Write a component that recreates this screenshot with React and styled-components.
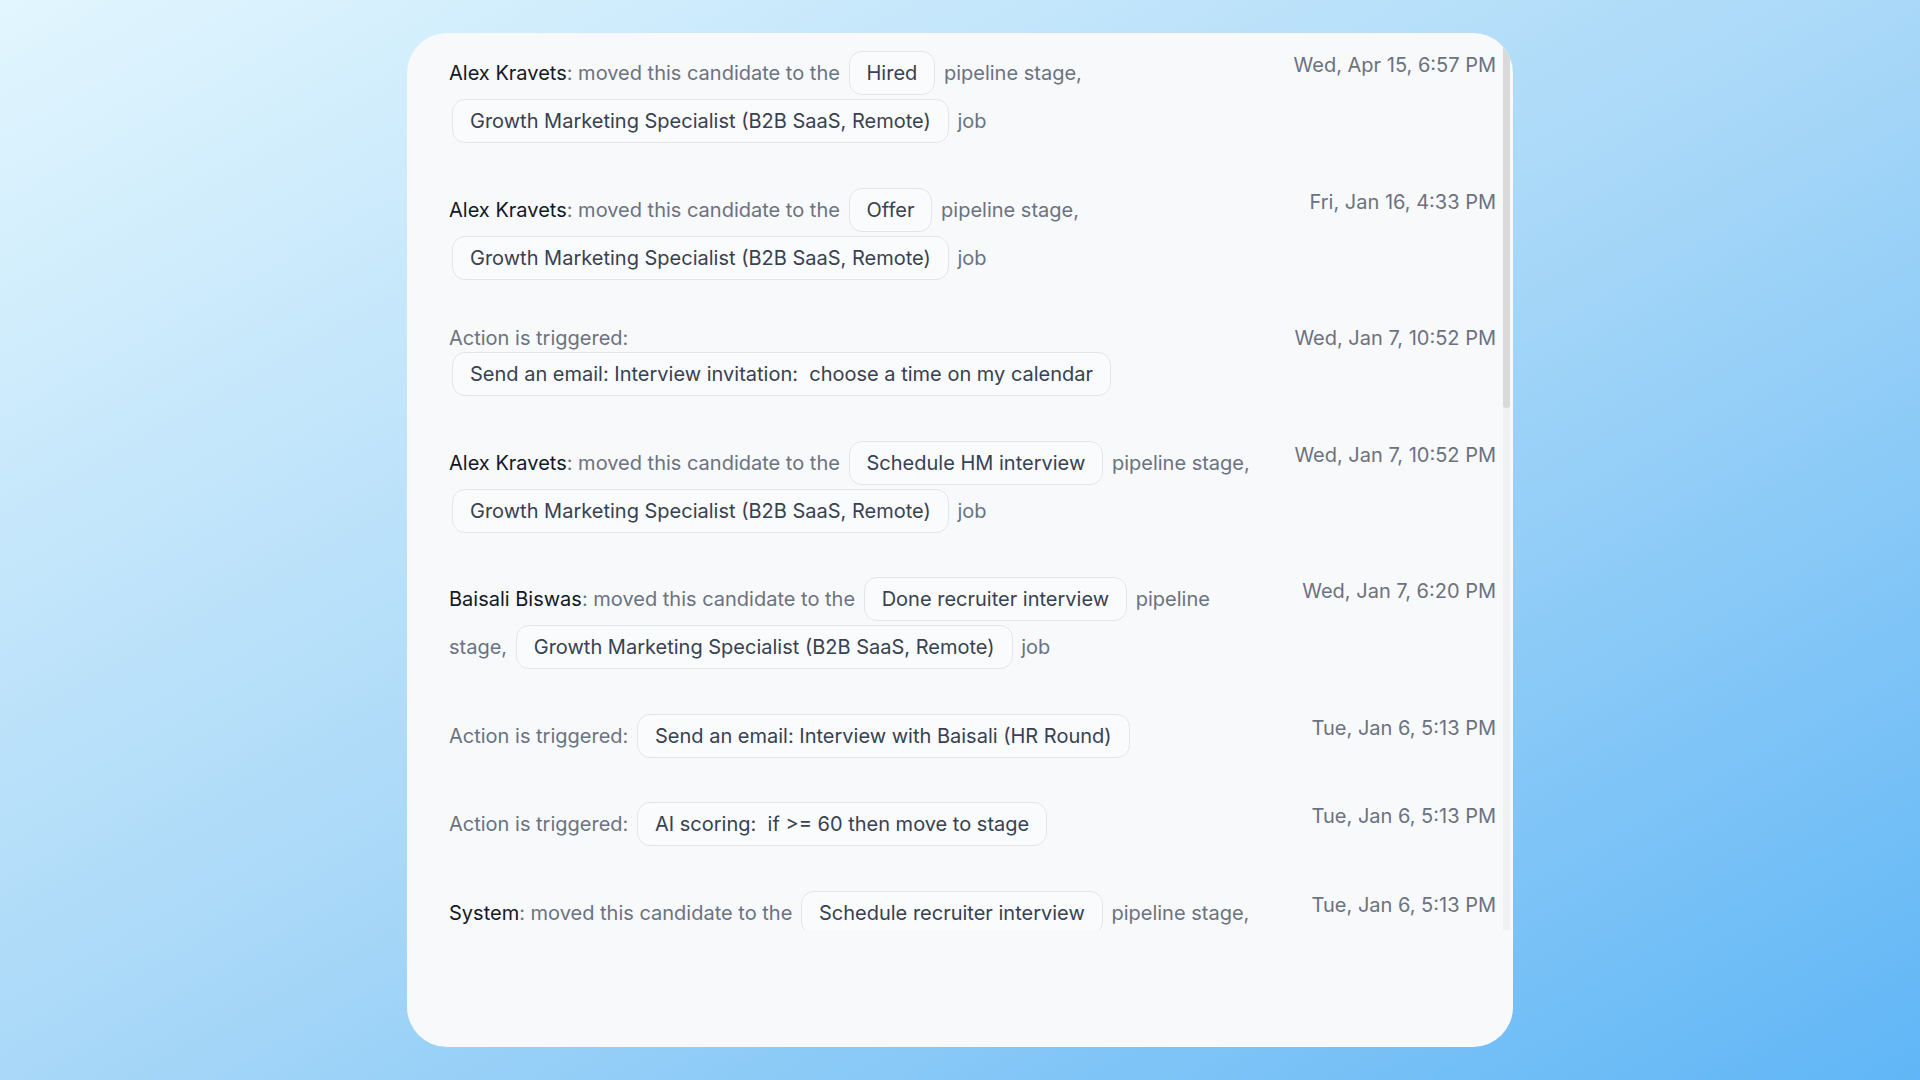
import React from "react";
import styled, { createGlobalStyle } from "styled-components";

const GlobalStyle = createGlobalStyle`
  html, body {
    margin: 0;
    padding: 0;
  }
  body {
    font-family: Inter, "Noto Sans", "Liberation Sans", sans-serif;
    -webkit-font-smoothing: antialiased;
  }
`;

const Backdrop = styled.div`
  width: 100vw;
  height: 100vh;
  display: flex;
  align-items: center;
  justify-content: center;
  background: linear-gradient(to bottom right, #e2f6fe 0%, #a9d8f8 50%, #60b6f6 100%);
`;

const Card = styled.div`
  width: 1106px;
  height: 1014px;
  box-sizing: border-box;
  background: #f8f9fb;
  border-radius: 40px;
  overflow: hidden;
  padding: 0 3px 117px 0;
  display: flex;
`;

const Feed = styled.div`
  flex: 1;
  min-width: 0;
  overflow-y: auto;
  scrollbar-width: none;
  padding: 18px 7px 0 42px;
  display: flex;
  flex-direction: column;
  gap: 40.5px;

  &::-webkit-scrollbar {
    display: none;
  }
`;

/* slim scroll rail along the right edge of the feed */
const Rail = styled.div`
  width: 7px;
  flex-shrink: 0;
  background: #f0f1f2;
  display: flex;
  flex-direction: column;
`;

const Thumb = styled.div`
  height: 375px;
  background: #d9d9da;
  border-radius: 0 0 4px 4px;
`;

const Entry = styled.div`
  display: flex;
  align-items: flex-start;
  gap: 36px;
  flex-shrink: 0;
`;

const Body = styled.div`
  flex: 1;
  font-size: 20px;
  line-height: 28px;
  color: #6b7280;
`;

const Actor = styled.span`
  color: #111827;
`;

const Tag = styled.span`
  display: inline-block;
  vertical-align: middle;
  margin: 0 3px 4px;
  padding: 8px 17px;
  line-height: 26px;
  border: 1px solid #e3e5e9;
  border-radius: 13px;
  background: #fafbfc;
  color: #374151;
  white-space: pre;
`;

const Stamp = styled.div`
  width: 210px;
  flex-shrink: 0;
  text-align: right;
  font-size: 20px;
  line-height: 28px;
  color: #6b7280;
  white-space: nowrap;
`;

const JOB = "Growth Marketing Specialist (B2B SaaS, Remote)";

const events = [
  { kind: "move", who: "Alex Kravets", stage: "Hired", job: JOB, at: "Wed, Apr 15, 6:57 PM" },
  { kind: "move", who: "Alex Kravets", stage: "Offer", job: JOB, at: "Fri, Jan 16, 4:33 PM" },
  { kind: "action", what: "Send an email: Interview invitation:  choose a time on my calendar", at: "Wed, Jan 7, 10:52 PM" },
  { kind: "move", who: "Alex Kravets", stage: "Schedule HM interview", job: JOB, at: "Wed, Jan 7, 10:52 PM" },
  { kind: "move", who: "Baisali Biswas", stage: "Done recruiter interview", job: JOB, at: "Wed, Jan 7, 6:20 PM" },
  { kind: "action", what: "Send an email: Interview with Baisali (HR Round)", at: "Tue, Jan 6, 5:13 PM" },
  { kind: "action", what: "AI scoring:  if >= 60 then move to stage", at: "Tue, Jan 6, 5:13 PM" },
  { kind: "move", who: "System", stage: "Schedule recruiter interview", job: JOB, at: "Tue, Jan 6, 5:13 PM" },
  { kind: "action", what: "Send an email: Thanks for applying", at: "Tue, Jan 6, 5:12 PM" },
  { kind: "move", who: "System", stage: "Applied", job: JOB, at: "Tue, Jan 6, 5:12 PM" },
  { kind: "action", what: "AI scoring:  calculate candidate score", at: "Tue, Jan 6, 5:12 PM" },
  { kind: "move", who: "System", stage: "New", job: JOB, at: "Tue, Jan 6, 5:11 PM" },
  { kind: "action", what: "Send an email: Application received", at: "Tue, Jan 6, 5:11 PM" },
  { kind: "move", who: "System", stage: "Sourced", job: JOB, at: "Tue, Jan 6, 5:10 PM" },
];

function EventText({ ev }) {
  if (ev.kind === "action") {
    return (
      <Body>
        Action is triggered: <Tag>{ev.what}</Tag>
      </Body>
    );
  }
  return (
    <Body>
      <Actor>{ev.who}</Actor>: moved this candidate to the <Tag>{ev.stage}</Tag> pipeline stage,{" "}
      <Tag>{ev.job}</Tag> job
    </Body>
  );
}

export default function App() {
  return (
    <>
      <GlobalStyle />
      <Backdrop>
        <Card>
          <Feed>
            {events.map((ev, i) => (
              <Entry key={i}>
                <EventText ev={ev} />
                <Stamp>{ev.at}</Stamp>
              </Entry>
            ))}
          </Feed>
          <Rail>
            <Thumb />
          </Rail>
        </Card>
      </Backdrop>
    </>
  );
}
